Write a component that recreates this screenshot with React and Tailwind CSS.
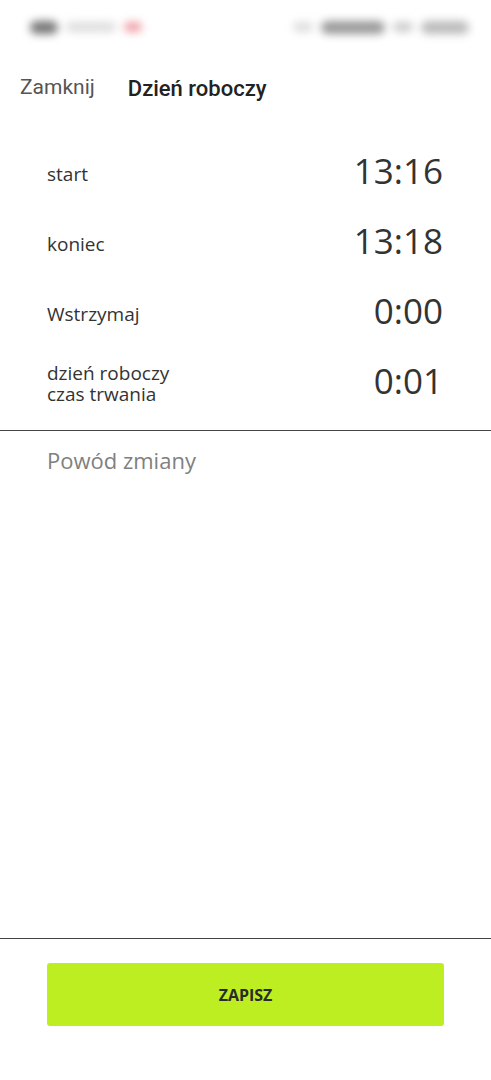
import React from 'react';

const rows = [
  { label: ['start'], value: '13:16' },
  { label: ['koniec'], value: '13:18' },
  { label: ['Wstrzymaj'], value: '0:00' },
  { label: ['dzień roboczy', 'czas trwania'], value: '0:01' },
];

const App = () => {
  return (
    <div className="h-screen w-full bg-white flex flex-col font-['Open_Sans',sans-serif] text-[#333]">
      {/* status bar, blurred */}
      <div className="h-[50px] flex items-center justify-between pl-[30px] pr-[22px] pt-[4px]">
        <div className="flex items-center gap-[8px] blur-[4px]">
          <div className="w-[28px] h-[13px] rounded-full bg-[#777]" />
          <div className="w-[50px] h-[10px] rounded-full bg-[#ddd]" />
          <div className="w-[18px] h-[10px] rounded-full bg-[#f0a0a8]" />
        </div>
        <div className="flex items-center gap-[8px] blur-[4px]">
          <div className="w-[20px] h-[10px] rounded-full bg-[#ddd]" />
          <div className="w-[64px] h-[13px] rounded-full bg-[#999]" />
          <div className="w-[20px] h-[10px] rounded-full bg-[#ccc]" />
          <div className="w-[48px] h-[13px] rounded-full bg-[#bbb]" />
        </div>
      </div>

      <div className="h-[76px] flex items-center pl-[20px] gap-[33px] font-['Roboto',sans-serif]">
        <span className="text-[21px] text-[#555]">Zamknij</span>
        <span className="text-[22px] font-medium text-[#222]">Dzień roboczy</span>
      </div>

      <div className="pt-[13px] pb-[11px] flex flex-col">
        {rows.map((r) => (
          <div key={r.value + r.label[0]} className="h-[70px] flex items-center justify-between pl-[47px] pr-[48px]">
            <p className="text-[19px] leading-[21px] text-[#333]">
              {r.label.map((l, i) => (
                <React.Fragment key={l}>
                  {i > 0 && <br />}
                  {l}
                </React.Fragment>
              ))}
            </p>
            <span className="text-[35px] leading-none mb-[8px] text-[#333]">{r.value}</span>
          </div>
        ))}
      </div>

      <div className="flex-1 border-t border-b border-[#444] pl-[47px] pt-[15px]">
        <span className="text-[22px] leading-[28px] text-[#808080]">Powód zmiany</span>
      </div>

      <div className="pt-[24px] pb-[54px] px-[47px]">
        <button className="w-full h-[63px] rounded-[3px] bg-[#bdee22] flex items-center justify-center text-[16px] font-bold text-[#2a2a2a]">
          ZAPISZ
        </button>
      </div>
    </div>
  );
};

export default App;
